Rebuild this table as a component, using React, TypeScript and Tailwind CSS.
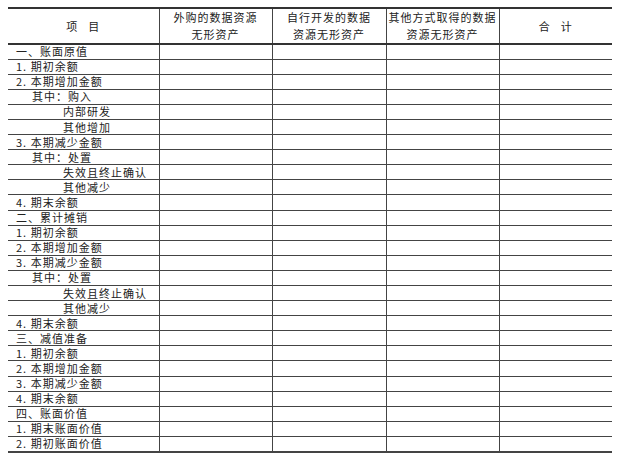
const rows: { label: string; indent: 0 | 1 | 2 }[] = [
  { label: "一、账面原值", indent: 0 },
  { label: "1. 期初余额", indent: 0 },
  { label: "2. 本期增加金额", indent: 0 },
  { label: "其中：购入", indent: 1 },
  { label: "内部研发", indent: 2 },
  { label: "其他增加", indent: 2 },
  { label: "3. 本期减少金额", indent: 0 },
  { label: "其中：处置", indent: 1 },
  { label: "失效且终止确认", indent: 2 },
  { label: "其他减少", indent: 2 },
  { label: "4. 期末余额", indent: 0 },
  { label: "二、累计摊销", indent: 0 },
  { label: "1. 期初余额", indent: 0 },
  { label: "2. 本期增加金额", indent: 0 },
  { label: "3. 本期减少金额", indent: 0 },
  { label: "其中：处置", indent: 1 },
  { label: "失效且终止确认", indent: 2 },
  { label: "其他减少", indent: 2 },
  { label: "4. 期末余额", indent: 0 },
  { label: "三、减值准备", indent: 0 },
  { label: "1. 期初余额", indent: 0 },
  { label: "2. 本期增加金额", indent: 0 },
  { label: "3. 本期减少金额", indent: 0 },
  { label: "4. 期末余额", indent: 0 },
  { label: "四、账面价值", indent: 0 },
  { label: "1. 期末账面价值", indent: 0 },
  { label: "2. 期初账面价值", indent: 0 },
];

const indentClass = ["pl-[8px]", "pl-[24px]", "pl-[55px]"];

export default function App() {
  return (
    <div
      className="min-h-screen bg-white pt-[7px] pl-[8px] text-[#222]"
      style={{ fontFamily: '"Noto Sans CJK SC", "Noto Sans", sans-serif' }}
    >
      <table className="w-[604px] table-fixed border-collapse text-[11px] leading-none tracking-[1px]">
        <colgroup>
          <col className="w-[151px]" />
          <col className="w-[113px]" />
          <col className="w-[114px]" />
          <col className="w-[113px]" />
          <col className="w-[113px]" />
        </colgroup>
        <thead>
          <tr className="h-[35px] border-t-2 border-b-2 border-[#333]">
            <th className="border-r border-[#444] text-center font-normal">
              项<span className="inline-block w-[10px]" />目
            </th>
            <th className="border-r border-[#444] text-center font-normal leading-[17px]">
              外购的数据资源
              <br />
              无形资产
            </th>
            <th className="border-r border-[#444] text-center font-normal leading-[17px]">
              自行开发的数据
              <br />
              资源无形资产
            </th>
            <th className="border-r border-[#444] text-center font-normal leading-[17px]">
              其他方式取得的数据
              <br />
              资源无形资产
            </th>
            <th className="text-center font-normal">
              合<span className="inline-block w-[10px]" />计
            </th>
          </tr>
        </thead>
        <tbody>
          {rows.map((r, i) => (
            <tr
              key={i}
              className={
                "h-[15.1px] border-b border-[#444] " +
                (i === rows.length - 1 ? "border-b-2" : "")
              }
            >
              <td className={"border-r border-[#444] p-0 whitespace-nowrap " + indentClass[r.indent]}>
                {r.label}
              </td>
              <td className="border-r border-[#444] p-0" />
              <td className="border-r border-[#444] p-0" />
              <td className="border-r border-[#444] p-0" />
              <td className="p-0" />
            </tr>
          ))}
        </tbody>
      </table>
    </div>
  );
}
